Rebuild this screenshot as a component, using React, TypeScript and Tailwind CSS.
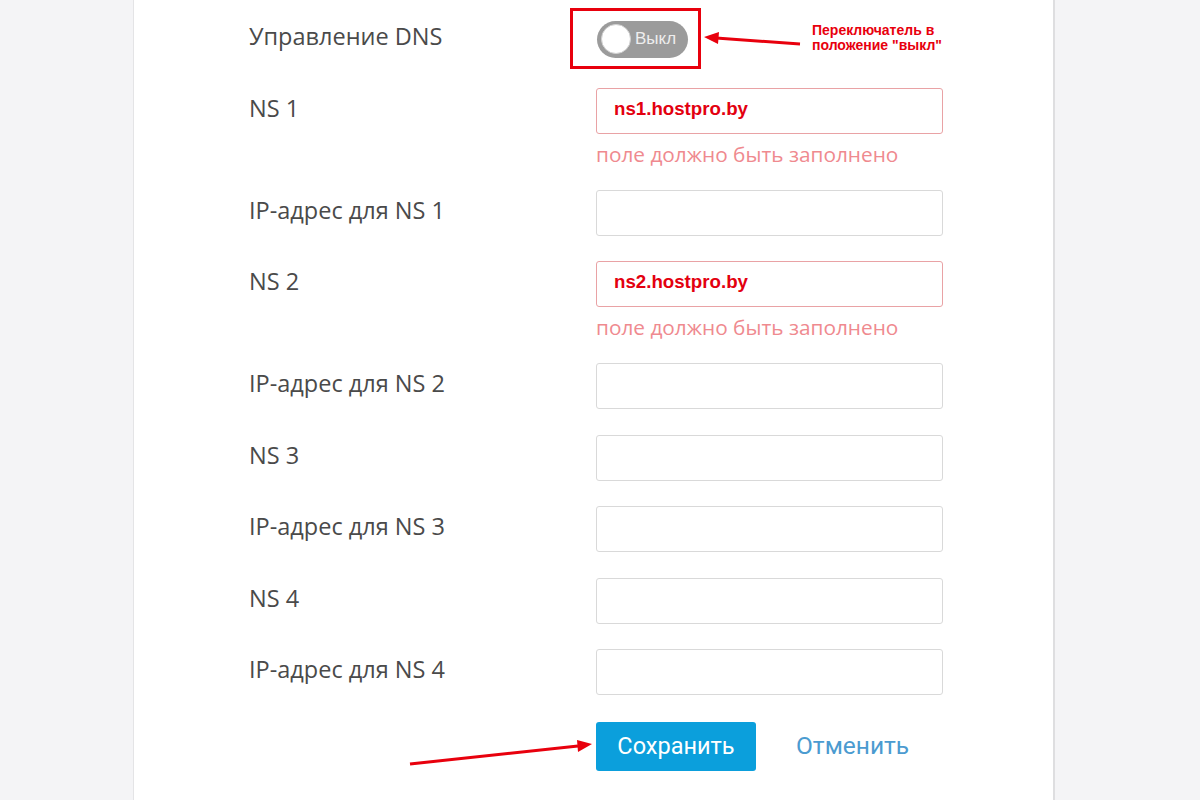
import React from 'react';

type Row = { label: string; value?: string; error?: boolean };

const rows: Row[] = [
  { label: 'NS 1', value: 'ns1.hostpro.by', error: true },
  { label: 'IP-адрес для NS 1' },
  { label: 'NS 2', value: 'ns2.hostpro.by', error: true },
  { label: 'IP-адрес для NS 2' },
  { label: 'NS 3' },
  { label: 'IP-адрес для NS 3' },
  { label: 'NS 4' },
  { label: 'IP-адрес для NS 4' },
];

function Field({ row }: { row: Row }) {
  return (
    <div className="flex items-start">
      <div className="w-[347px] h-[46px] flex items-center pb-[4px] text-[23.5px] text-[#4a4a4a]">{row.label}</div>
      <div className="w-[347px]">
        <div
          className={
            row.error
              ? 'h-[46px] rounded-[3px] border border-[#e9a2a5] bg-white flex items-center pl-[17px] pb-[3px]'
              : 'h-[46px] rounded-[3px] border border-[#d9d9d9] bg-white'
          }
        >
          {row.value && (
            <span className="text-[18.7px] font-bold text-[#e3000f] font-['Liberation_Sans',Arial,sans-serif]">{row.value}</span>
          )}
        </div>
        {row.error && (
          <div className="pt-[10px] h-[30.5px] leading-[20px] text-[20.8px] text-[#ef8a8f]">поле должно быть заполнено</div>
        )}
      </div>
    </div>
  );
}

export default function App() {
  return (
    <div className="relative flex w-[1200px] h-[800px] overflow-hidden bg-[#f4f4f6] font-['Open_Sans',sans-serif]">
      <div className="w-[133px] shrink-0" />
      <main className="w-[922px] shrink-0 bg-white border-l border-[#e4e4e6] border-r-[2px] border-r-[#dedee0] pl-[115px] pt-[16px]">
        <div className="flex flex-col gap-[25.5px]">
          <div className="flex items-start">
            <div className="w-[347px] h-[46px] flex items-center pb-[4px] text-[23.5px] text-[#4a4a4a]">Управление DNS</div>
            <div className="relative h-[46px] flex items-center pl-[1px]">
              <div className="w-[91px] h-[37px] rounded-full bg-[#9b9b9b] flex items-center px-[4px] gap-[4px]">
                <div className="w-[30px] h-[30px] rounded-full bg-white border border-[#d0d0d0]" />
                <span className="text-[17px] text-[#eeeeee] font-['Liberation_Sans',Arial,sans-serif]">Выкл</span>
              </div>
              <div className="absolute left-[-26px] top-[-8px] w-[131px] h-[61px] border-[3px] border-[#e8000d]" />
            </div>
          </div>
          {rows.map((r) => (
            <Field key={r.label} row={r} />
          ))}
          <div className="flex items-center pl-[347px] pt-[1.5px]">
            <button className="w-[160px] h-[49px] rounded-[3px] bg-[#0b9fdc] text-white text-[23.5px] font-['Roboto',sans-serif]">
              Сохранить
            </button>
            <span className="ml-[40px] text-[24.5px] text-[#4b9bd0] font-['Roboto',sans-serif]">Отменить</span>
          </div>
        </div>
      </main>
      <div className="flex-1" />

      <div className="absolute left-[812px] top-[23px] text-[14px] leading-[15px] font-bold text-[#e8000d] font-['Liberation_Sans',Arial,sans-serif]">
        <div>Переключатель в</div>
        <div>положение "выкл"</div>
      </div>
      <svg className="absolute left-0 top-0 pointer-events-none" width="1200" height="800">
        <line x1="800" y1="44" x2="716" y2="38" stroke="#e8000d" strokeWidth="3" />
        <polygon points="704,37 719,32 718,44" fill="#e8000d" />
        <line x1="410" y1="764" x2="578" y2="746" stroke="#e8000d" strokeWidth="3" />
        <polygon points="592,744 577,740 578,752" fill="#e8000d" />
      </svg>
    </div>
  );
}
